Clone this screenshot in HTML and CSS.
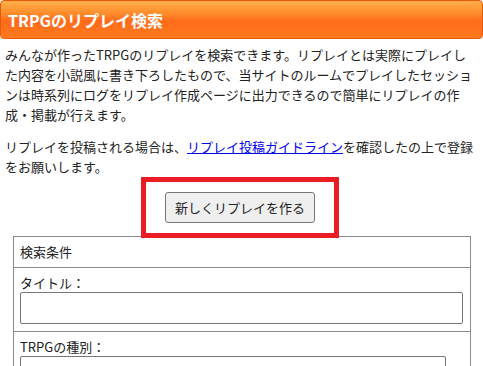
FILE: index.html
```html
<!DOCTYPE html>
<html lang="ja">
<head>
  <meta charset="UTF-8" />
  <meta name="viewport" content="width=device-width, initial-scale=1.0"/>
  <title>TRPGのリプレイ検索</title>
  <link rel="stylesheet" href="styles.css">
</head>
<body>
  <header class="page-title">
    <h1>TRPGのリプレイ検索</h1>
  </header>

  <main>
    <p>みんなが作ったTRPGのリプレイを検索できます。リプレイとは実際にプレイした内容を小説風に書き下ろしたもので、当サイトのルームでプレイしたセッションは時系列にログをリプレイ作成ページに出力できるので簡単にリプレイの作成・掲載が行えます。</p>
    <p class="note">リプレイを投稿される場合は、<a href="#">リプレイ投稿ガイドライン</a>を確認したの上で登録をお願いします。</p>

    <div class="create">
      <div class="mark">
        <button type="button">新しくリプレイを作る</button>
      </div>
    </div>

    <table class="search">
      <tr><th>検索条件</th></tr>
      <tr>
        <td>
          <label>タイトル：</label>
          <input type="text" class="wide">
        </td>
      </tr>
      <tr>
        <td>
          <label>TRPGの種別：</label>
          <input type="text" class="mid">
        </td>
      </tr>
    </table>
  </main>
</body>
</html>
```

FILE: styles.css
```css
/* ---- base ---- */
body {
  margin: 0;
  font-family: "Noto Sans CJK JP", "Noto Sans", sans-serif;
  font-size: 13px;
  color: #222;
  background: #fff;
}

.page-title {
  height: 37px;
  border: 1px solid #e8590c;
  border-radius: 4px;
  background: linear-gradient(#ffb04a 0%, #ff8a2a 35%, #ff6a1a 55%, #ff7a1e 100%);
  padding: 0 7px;
  display: flex;
  align-items: center;
}

.page-title h1 {
  margin: 0;
  font-size: 16px;
  font-weight: bold;
  color: #fff;
}

main {
  padding: 0 8px 0 5px;
}

main p {
  margin: 6px 0 12px;
  line-height: 20px;
}

main p.note {
  margin-bottom: 0;
}

main a {
  color: #00e;
}

/* ---- new replay button ---- */
.create {
  text-align: center;
}

.mark {
  display: inline-block;
  position: relative;
  z-index: 1;
  border: 5px solid #ec1c24;
  padding: 10px 19px;
  margin-bottom: -2px;
}

.mark button {
  display: block;
  font-family: inherit;
  font-size: 13px;
  color: #222;
  background: #efefef;
  border: 1px solid #767676;
  border-radius: 3px;
  width: 150px;
  height: 31px;
}

/* ---- search table ---- */
.search {
  width: 458px;
  margin-left: 8px;
  border-collapse: collapse;
}

.search th,
.search td {
  border: 1px solid #8a8a8a;
  padding: 6px 6px;
  text-align: left;
  font-weight: normal;
  line-height: 18px;
}

.search label {
  display: block;
}

.search input {
  display: block;
  box-sizing: border-box;
  height: 32px;
  border: 1px solid #767676;
  border-radius: 2px;
  margin-bottom: 1px;
}

.search .wide { width: 443px; }
.search .mid { width: 426px; }
```
